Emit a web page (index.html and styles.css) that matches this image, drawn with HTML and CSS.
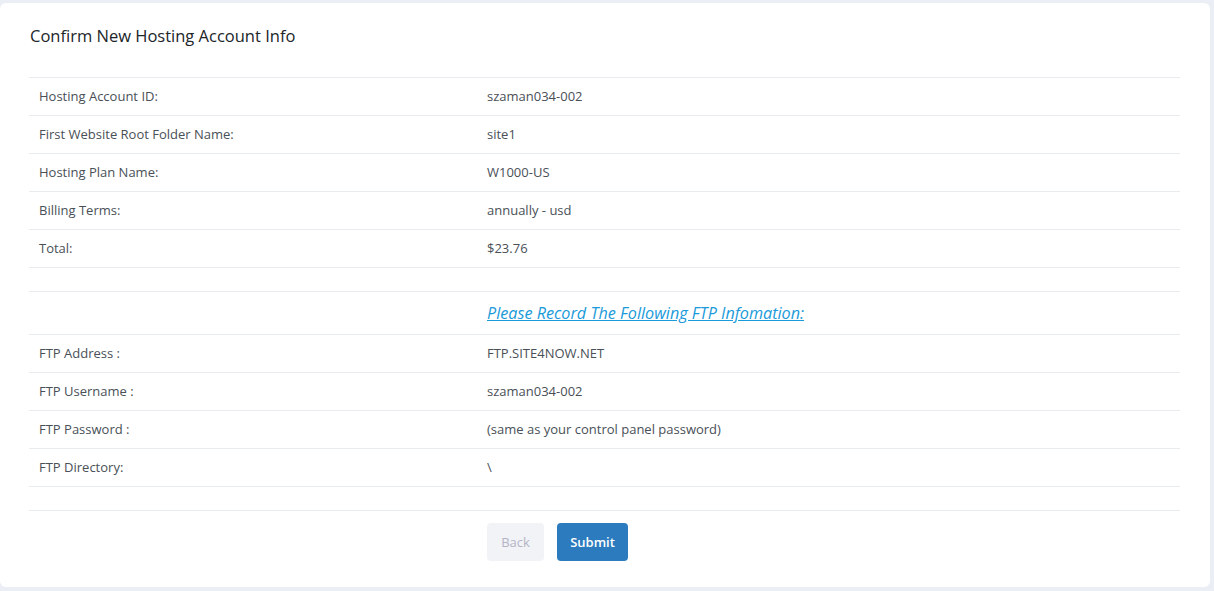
FILE: index.html
```html
<!DOCTYPE html>
<html>
<head>
<meta charset="utf-8">
<title>Confirm New Hosting Account Info</title>
<link rel="stylesheet" href="styles.css">
</head>
<body>
<div class="card">
  <h2 class="title">Confirm New Hosting Account Info</h2>
  <div class="info">
    <div class="row"><div class="label">Hosting Account ID:</div><div class="value">szaman034-002</div></div>
    <div class="row"><div class="label">First Website Root Folder Name:</div><div class="value">site1</div></div>
    <div class="row"><div class="label">Hosting Plan Name:</div><div class="value">W1000-US</div></div>
    <div class="row"><div class="label">Billing Terms:</div><div class="value">annually - usd</div></div>
    <div class="row"><div class="label">Total:</div><div class="value">$23.76</div></div>
    <div class="row spacer"></div>
    <div class="row heading"><div class="label"></div><div class="value"><a class="ftp-link" href="#">Please Record The Following FTP Infomation:</a></div></div>
    <div class="row"><div class="label">FTP Address :</div><div class="value">FTP.SITE4NOW.NET</div></div>
    <div class="row"><div class="label">FTP Username :</div><div class="value">szaman034-002</div></div>
    <div class="row"><div class="label">FTP Password :</div><div class="value">(same as your control panel password)</div></div>
    <div class="row"><div class="label">FTP Directory:</div><div class="value">\</div></div>
    <div class="row spacer"></div>
  </div>
  <div class="actions">
    <button class="btn btn-back" disabled>Back</button>
    <button class="btn btn-submit">Submit</button>
  </div>
</div>
</body>
</html>
```
FILE: styles.css
```css
html, body {
  margin: 0;
  padding: 0;
}
body {
  background: #eceef6;
  font-family: "Open Sans", "Noto Sans", sans-serif;
  color: #495057;
  padding: 3px 4px 4px 0;
  height: 591px;
  box-sizing: border-box;
}
.card {
  background: #ffffff;
  border-radius: 6px;
  height: 584px;
  box-sizing: border-box;
  padding: 20px 30px 0 29px;
}
.title {
  margin: 0;
  font-size: 16.5px;
  font-weight: 400;
  line-height: 26px;
  color: #212529;
  padding-left: 1px;
}
.info {
  margin-top: 28px;
  border-bottom: 1px solid #e9ecef;
}
.row {
  display: flex;
  align-items: center;
  height: 38px;
  box-sizing: border-box;
  border-top: 1px solid #e9ecef;
  font-size: 13px;
  padding-bottom: 2px;
}
.row.spacer {
  height: 24px;
}
.row.heading {
  height: 43px;
  padding-bottom: 0;
}
.label {
  width: 448px;
  padding-left: 10px;
  box-sizing: border-box;
  flex: none;
}
.value {
  padding-left: 10px;
}
.ftp-link {
  color: #1a9ad9;
  font-style: italic;
  font-size: 16.2px;
  text-decoration: underline;
}
.actions {
  display: flex;
  gap: 13px;
  padding-left: 458px;
  margin-top: 12px;
}
.btn {
  height: 38px;
  border: none;
  border-radius: 4px;
  font-family: "Open Sans", "Noto Sans", sans-serif;
  font-size: 13px;
  padding: 0;
}
.btn-back {
  width: 57px;
  background: #f1f3f7;
  color: #b5b3c6;
}
.btn-submit {
  width: 71px;
  background: #2b7bbe;
  color: #ffffff;
  font-weight: 600;
}
```
